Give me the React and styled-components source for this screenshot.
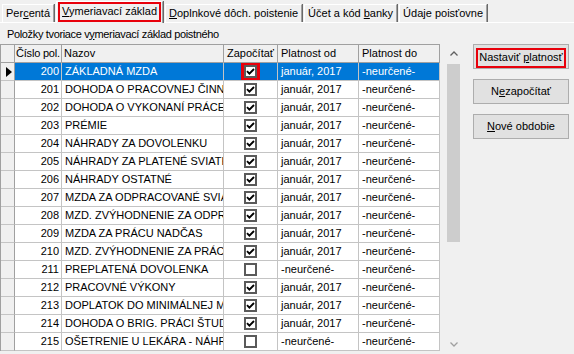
import React from "react";
import styled, { createGlobalStyle } from "styled-components";

const GlobalStyle = createGlobalStyle`
  html, body {
    margin: 0;
    background: #f0f0f0;
  }
  body {
    font-family: "Liberation Sans", Arial, sans-serif;
    font-size: 11px;
    color: #000;
    overflow: hidden;
  }
`;

const Window = styled.div`
  width: 574px;
  height: 354px;
  overflow: hidden;
  background: #f0f0f0;
`;

const TabStrip = styled.div`
  display: flex;
  align-items: flex-end;
  height: 22px;
  padding-left: 2px;
  gap: 2px;
  border-bottom: 1px solid #ffffff;
`;

const Tab = styled.div`
  box-sizing: border-box;
  display: flex;
  align-items: center;
  height: ${({ $active }) => ($active ? "22px" : "18px")};
  margin: ${({ $active }) => ($active ? "0 0 -1px 0" : "0")};
  padding: ${({ $active }) => ($active ? "0 1px 1px" : "0 3px")};
  border-top: 1px solid #ffffff;
  border-left: 1px solid #ffffff;
  border-right: 1px solid #a0a0a0;
  box-shadow: 1px 0 0 #696969;
  background: #f0f0f0;
  position: relative;
  z-index: ${({ $active }) => ($active ? 1 : 0)};
  white-space: nowrap;
  line-height: 13px;
`;

const TabLabel = styled.span`
  border: ${({ $marked }) => ($marked ? "2px solid #e8000b" : "none")};
  padding: ${({ $marked }) => ($marked ? "1px 2px 2px" : "0")};
`;

const Caption = styled.div`
  height: 21px;
  padding-left: 7px;
  display: flex;
  align-items: center;
  letter-spacing: -0.35px;
`;

const Content = styled.div`
  display: flex;
  align-items: flex-start;
`;

const GridArea = styled.div`
  display: flex;
  width: 462px;
  height: 310px;
`;

const Table = styled.table`
  table-layout: fixed;
  width: 440px;
  border-collapse: separate;
  border-spacing: 0;
  border-top: 1px solid #a0a0a0;
  border-left: 1px solid #a0a0a0;
  align-self: flex-start;
  background: #ffffff;
`;

const HeadCell = styled.th`
  height: 17px;
  padding: 0 0 0 ${({ $pad }) => $pad ?? 2}px;
  font-weight: normal;
  text-align: left;
  background: #f0f0f0;
  border-right: 1px solid #a0a0a0;
  border-bottom: 1px solid #a0a0a0;
  white-space: nowrap;
  overflow: hidden;
  line-height: 17px;
  letter-spacing: ${({ $tight }) => ($tight ? "-0.2px" : "0")};
`;

const Cell = styled.td`
  height: 17px;
  padding: ${({ $align }) => ($align === "right" ? "0 2px 0 0" : "0 0 0 3px")};
  text-align: ${({ $align }) => $align || "left"};
  background: ${({ $selected }) => ($selected ? "#0078d7" : "#ffffff")};
  color: ${({ $selected }) => ($selected ? "#ffffff" : "#000000")};
  border-right: 1px solid #c4c4c4;
  border-bottom: 1px solid #c4c4c4;
  white-space: nowrap;
  overflow: hidden;
  text-overflow: clip;
  line-height: 17px;
`;

const IndicatorCell = styled.td`
  height: 17px;
  padding: 0;
  background: #f0f0f0;
  border-right: 1px solid #a0a0a0;
  border-bottom: 1px solid #c4c4c4;
`;

const Arrow = styled.div`
  width: 0;
  height: 0;
  margin-left: 5px;
  border-left: 6px solid #000;
  border-top: 5px solid transparent;
  border-bottom: 5px solid transparent;
`;

const CheckCell = styled(Cell)`
  padding: 0;
  text-align: center;
`;

const CheckBox = styled.span`
  box-sizing: border-box;
  display: inline-flex;
  align-items: center;
  justify-content: center;
  vertical-align: middle;
  width: 13px;
  height: 13px;
  margin-top: -2px;
  background: #ffffff;
  border: 2px solid #5a5a5a;
  outline: ${({ $marked }) => ($marked ? "3px solid #e8000b" : "none")};
`;

const Scrollbar = styled.div`
  width: 17px;
  height: 310px;
  margin-left: 5px;
  background: #f0f0f0;
  display: flex;
  flex-direction: column;
  align-items: center;
`;

const ScrollArrow = styled.div`
  height: 19px;
  display: flex;
  align-items: center;
  justify-content: center;
`;

const Thumb = styled.div`
  width: 13px;
  height: 178px;
  background: #cdcdcd;
  margin-top: 1px;
`;

const Spacer = styled.div`
  flex: 1;
`;

const ButtonColumn = styled.div`
  width: 96px;
  margin-left: 11px;
  display: flex;
  flex-direction: column;
  gap: 10px;
`;

const Button = styled.button`
  box-sizing: border-box;
  width: 96px;
  height: 25px;
  padding: 0;
  background: #e1e1e1;
  border: 1px solid #adadad;
  font-family: inherit;
  font-size: 11px;
  color: #000;
  display: flex;
  align-items: center;
  justify-content: center;
`;

const ButtonLabel = styled.span`
  border: ${({ $marked }) => ($marked ? "2px solid #e8000b" : "none")};
  padding: ${({ $marked }) => ($marked ? "1px 1px 2px" : "0")};
  margin-top: ${({ $marked }) => ($marked ? "2px" : "0")};
  line-height: 13px;
`;

const rows = [
  [200, "ZÁKLADNÁ MZDA", true, "január, 2017"],
  [201, "DOHODA O PRACOVNEJ ČINNOSTI", true, "január, 2017"],
  [202, "DOHODA O VYKONANÍ PRÁCE", true, "január, 2017"],
  [203, "PRÉMIE", true, "január, 2017"],
  [204, "NÁHRADY ZA DOVOLENKU", true, "január, 2017"],
  [205, "NÁHRADY ZA PLATENÉ SVIATKY", true, "január, 2017"],
  [206, "NÁHRADY OSTATNÉ", true, "január, 2017"],
  [207, "MZDA ZA ODPRACOVANÉ SVIATKY", true, "január, 2017"],
  [208, "MZD. ZVÝHODNENIE ZA ODPRACOVANÉ", true, "január, 2017"],
  [209, "MZDA ZA PRÁCU NADČAS", true, "január, 2017"],
  [210, "MZD. ZVÝHODNENIE ZA PRÁCU NADČAS", true, "január, 2017"],
  [211, "PREPLATENÁ DOVOLENKA", false, "-neurčené-"],
  [212, "PRACOVNÉ VÝKONY", true, "január, 2017"],
  [213, "DOPLATOK DO MINIMÁLNEJ MZDY", true, "január, 2017"],
  [214, "DOHODA O BRIG. PRÁCI ŠTUDENTOV", true, "január, 2017"],
  [215, "OŠETRENIE U LEKÁRA - NÁHRADA", false, "-neurčené-"],
];

const Check = () => (
  <svg width="9" height="9" viewBox="0 0 9 9">
    <path d="M1 4.2 L3.4 6.6 L8 2" fill="none" stroke="#000" strokeWidth="1.9" />
  </svg>
);

const Chevron = ({ down }) => (
  <svg width="8" height="5" viewBox="0 0 8 5">
    <path
      d={down ? "M0.5 0.5 L4 4 L7.5 0.5" : "M0.5 4.5 L4 1 L7.5 4.5"}
      fill="none"
      stroke={down ? "#a0a0a0" : "#606060"}
      strokeWidth="1.3"
    />
  </svg>
);

export default function App() {
  return (
    <Window>
      <GlobalStyle />
      <TabStrip>
        <Tab>
          <span>
            Per<u>c</u>entá
          </span>
        </Tab>
        <Tab $active>
          <TabLabel $marked>
            <u>V</u>ymeriavací základ
          </TabLabel>
        </Tab>
        <Tab>
          <span>
            <u>D</u>oplnkové dôch. poistenie
          </span>
        </Tab>
        <Tab>
          <span>
            Účet a kód <u>b</u>anky
          </span>
        </Tab>
        <Tab>
          <span>Údaje poisťovne</span>
        </Tab>
      </TabStrip>
      <Caption>
        <span>
          Položky tvoriace v<u>y</u>meriavací základ poistného
        </span>
      </Caption>
      <Content>
        <GridArea>
          <Table>
            <colgroup>
              <col style={{ width: 14 }} />
              <col style={{ width: 47 }} />
              <col style={{ width: 162 }} />
              <col style={{ width: 54 }} />
              <col style={{ width: 81 }} />
              <col style={{ width: 81 }} />
            </colgroup>
            <thead>
              <tr>
                <HeadCell />
                <HeadCell $pad={1} $tight>
                  Číslo pol.
                </HeadCell>
                <HeadCell>Nazov</HeadCell>
                <HeadCell $pad={3}>Započítať</HeadCell>
                <HeadCell $pad={3}>Platnost od</HeadCell>
                <HeadCell $pad={3}>Platnost do</HeadCell>
              </tr>
            </thead>
            <tbody>
              {rows.map(([num, name, checked, from], i) => {
                const sel = i === 0;
                return (
                  <tr key={num}>
                    <IndicatorCell>{sel && <Arrow />}</IndicatorCell>
                    <Cell $align="right" $selected={sel}>
                      {num}
                    </Cell>
                    <Cell $selected={sel}>{name}</Cell>
                    <CheckCell $selected={sel}>
                      <CheckBox $marked={sel}>{checked && <Check />}</CheckBox>
                    </CheckCell>
                    <Cell $selected={sel}>{from}</Cell>
                    <Cell $selected={sel}>-neurčené-</Cell>
                  </tr>
                );
              })}
            </tbody>
          </Table>
          <Scrollbar>
            <ScrollArrow>
              <Chevron />
            </ScrollArrow>
            <Thumb />
            <Spacer />
            <ScrollArrow>
              <Chevron down />
            </ScrollArrow>
          </Scrollbar>
        </GridArea>
        <ButtonColumn>
          <Button>
            <ButtonLabel $marked>
              Nastaviť <u>p</u>latnosť
            </ButtonLabel>
          </Button>
          <Button>
            <ButtonLabel>
              N<u>e</u>započítať
            </ButtonLabel>
          </Button>
          <Button>
            <ButtonLabel>
              <u>N</u>ové obdobie
            </ButtonLabel>
          </Button>
        </ButtonColumn>
      </Content>
    </Window>
  );
}
